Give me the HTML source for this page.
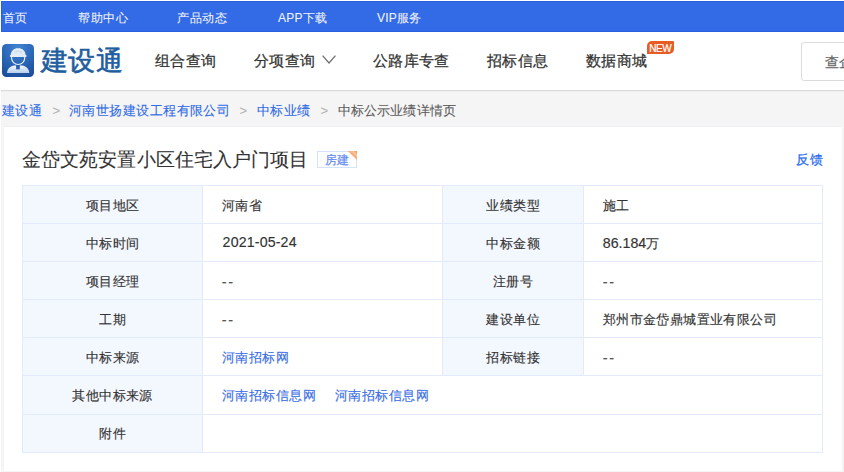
<!DOCTYPE html>
<html><head><meta charset="utf-8">
<style>
*{margin:0;padding:0;box-sizing:border-box}
html,body{width:844px;height:472px;overflow:hidden;background:#fff}
body{position:relative;font-family:"Liberation Sans",sans-serif;color:#333;-webkit-text-stroke:0.25px currentColor}
.a{position:absolute;white-space:nowrap;line-height:1}
#top{position:absolute;left:1px;top:1px;width:843px;height:31px;background:#336ae5;box-shadow:inset 1px 1px 0 #2a5fe2,inset 0 -1px 0 #2a5fe2}
#top .a{color:#eef2fd;font-size:12px;letter-spacing:0.6px;top:11px;-webkit-text-stroke:0.1px currentColor}
#nav{position:absolute;left:0;top:32px;width:844px;height:58px;background:#fff}
.it{letter-spacing:0.35px}
#gray{position:absolute;left:1px;top:90px;width:843px;height:382px;background:#f5f5f5;border-top:1px solid #dadada}
#gray2{position:absolute;left:1px;top:91px;width:843px;height:1px;background:#efefef}
.bc{font-size:13px;letter-spacing:0.45px;top:104px;color:#2f6be6;-webkit-text-stroke:0.1px currentColor}
.bc.sep{color:#b4b4b4;font-size:13px;top:104px}
.bc.cur{color:#5c5c5c}
#panel{position:absolute;left:4px;top:126px;width:838px;height:345px;background:#fff;border-top:1px solid #efeff3}
#title{font-size:19px;letter-spacing:0.1px;color:#333;left:22px;top:150px;-webkit-text-stroke:0.1px currentColor}
table{position:absolute;left:22px;top:185px;border-collapse:collapse;table-layout:fixed}
td{border:1px solid #e3eafc;height:38px;font-size:13px;letter-spacing:0.4px;color:#333;padding:2px 0 0 0;-webkit-text-stroke:0.15px currentColor}
td.h{background:#f3f7fe;text-align:center}
td.v{padding-left:18.8px}
.n{font-size:14.2px;letter-spacing:0}
td a{color:#3a6ee6;text-decoration:none;letter-spacing:0.5px}
td.h{text-indent:0.4px}
.d{font-size:14.5px;letter-spacing:1.6px;color:#555}
</style></head><body>
<div id="top">
  <div class="a" style="left:2px;letter-spacing:0">首页</div>
  <div class="a" style="left:77px">帮助中心</div>
  <div class="a" style="left:176px">产品动态</div>
  <div class="a" style="left:277px;letter-spacing:0.2px">APP下载</div>
  <div class="a" style="left:376px;letter-spacing:0.2px">VIP服务</div>
</div>
<div id="nav"></div>
<svg class="a" style="left:2px;top:44px" width="32" height="33" viewBox="0 0 32 33">
  <defs>
    <radialGradient id="bg" cx="0.5" cy="0.1" r="1">
      <stop offset="0" stop-color="#4184d2"/>
      <stop offset="0.6" stop-color="#2760b0"/>
      <stop offset="1" stop-color="#1a4a98"/>
    </radialGradient>
    <linearGradient id="sh" x1="0" y1="0" x2="0" y2="1">
      <stop offset="0" stop-color="#f4f8fc"/>
      <stop offset="1" stop-color="#b7d0ec"/>
    </linearGradient>
    <linearGradient id="hm" x1="0" y1="0" x2="0" y2="1">
      <stop offset="0" stop-color="#e9f1f9"/>
      <stop offset="1" stop-color="#dfe9f5"/>
    </linearGradient>
  </defs>
  <rect x="0" y="0" width="32" height="33" rx="4.5" fill="url(#bg)"/>
  <path d="M8.7 11.4 C8.7 7 11.8 4.3 16.15 4.3 C20.5 4.3 23.6 7 23.6 11.4 Z" fill="url(#hm)"/>
  <path d="M12.2 8.2 Q16.15 5.6 20.1 8.2" fill="none" stroke="#b9cfe8" stroke-width="0.8"/>
  <rect x="7.8" y="11" width="16.8" height="2.1" rx="1" fill="#e6eff8"/>
  <path d="M9.6 13 L9.6 14 A6.55 6.45 0 0 0 22.7 14 L22.7 13" fill="none" stroke="#eef4fa" stroke-width="1.1"/>
  <path d="M5 28.9 C5.4 24.3 8.4 22.1 12.3 21.5 L20 21.5 C23.9 22.1 26.9 24.3 27.3 28.9 Z" fill="url(#sh)"/>
  <rect x="14.1" y="21" width="3.7" height="4.4" fill="#2a5fae"/>
</svg>
<div class="a" style="left:40.5px;top:47.5px;font-size:27px;letter-spacing:0.8px;color:#1f5e9f;-webkit-text-stroke:0.6px #1f5e9f">建设通</div>
<div class="a it" style="left:155px;top:52.5px;font-size:15.3px">组合查询</div>
<div class="a it" style="left:254px;top:52.5px;font-size:15.3px">分项查询</div>
<svg class="a" style="left:321px;top:54px" width="16" height="11" viewBox="0 0 16 11"><path d="M1.6 1.6 L8 8.9 L14.4 1.6" fill="none" stroke="#6e6e6e" stroke-width="1.3"/></svg>
<div class="a it" style="left:373px;top:52.5px;font-size:15.3px">公路库专查</div>
<div class="a it" style="left:487px;top:52.5px;font-size:15.3px">招标信息</div>
<div class="a it" style="left:586px;top:52.5px;font-size:15.3px">数据商城</div>
<div class="a" style="left:647px;top:41px;width:27px;height:13px;background:#e65c22;border-radius:5px 1px 5px 0;color:#fff;font-size:10px;letter-spacing:-0.4px;text-indent:-0.4px;-webkit-text-stroke:0.2px #fff;text-align:center;line-height:15px">NEW</div>
<div class="a" style="left:801px;top:42px;width:60px;height:39px;border:1px solid #dcdcdc;border-radius:3px;background:#fff"></div>
<div class="a" style="left:825px;top:55px;font-size:14px;color:#666">查企</div>

<div id="gray"></div><div id="gray2"></div>
<div class="a bc" style="left:2px">建设通</div>
<div class="a bc sep" style="left:52.5px">&gt;</div>
<div class="a bc" style="left:69px">河南世扬建设工程有限公司</div>
<div class="a bc sep" style="left:239.5px">&gt;</div>
<div class="a bc" style="left:257px">中标业绩</div>
<div class="a bc sep" style="left:320.5px">&gt;</div>
<div class="a bc cur" style="left:337.5px;letter-spacing:0.2px">中标公示业绩详情页</div>

<div id="panel"></div>
<div class="a" id="title">金岱文苑安置小区住宅入户门项目</div>
<div class="a" style="left:317px;top:151px;width:40px;height:17px;border:1px solid #d6e2fb;color:#6a8ff0;font-size:11.5px;text-align:center;line-height:17px;text-indent:-1px;background:#fff">房建</div>
<svg class="a" style="left:348px;top:151px" width="9" height="9"><defs><linearGradient id="tg" x1="0.5" y1="0.5" x2="1" y2="0"><stop offset="0" stop-color="#f5a467"/><stop offset="0.5" stop-color="#f8c69a"/><stop offset="1" stop-color="#f08c48"/></linearGradient></defs><path d="M0 0 L9 0 L9 9 Z" fill="url(#tg)"/></svg>
<div class="a" style="left:796px;top:152.5px;font-size:13px;letter-spacing:1px;color:#2b6cf0">反馈</div>

<table>
<colgroup><col style="width:180px"><col style="width:240px"><col style="width:141px"><col style="width:239px"></colgroup>
<tr><td class="h">项目地区</td><td class="v">河南省</td><td class="h">业绩类型</td><td class="v">施工</td></tr>
<tr><td class="h">中标时间</td><td class="v"><span class="n" style="position:relative;top:-1.2px;left:0.8px;letter-spacing:0.15px">2021-05-24</span></td><td class="h">中标金额</td><td class="v"><span class="n">86.184</span>万</td></tr>
<tr><td class="h">项目经理</td><td class="v"><span class="d">--</span></td><td class="h">注册号</td><td class="v"><span class="d">--</span></td></tr>
<tr><td class="h">工期</td><td class="v"><span class="d">--</span></td><td class="h">建设单位</td><td class="v">郑州市金岱鼎城置业有限公司</td></tr>
<tr><td class="h">中标来源</td><td class="v"><a>河南招标网</a></td><td class="h">招标链接</td><td class="v"><span class="d">--</span></td></tr>
<tr style="height:39px"><td class="h" style="height:39px">其他中标来源</td><td class="v" colspan="3"><a>河南招标信息网</a><a style="margin-left:18.5px">河南招标信息网</a></td></tr>
<tr><td class="h" style="padding-top:0">附件</td><td class="v" colspan="3"></td></tr>
</table>
</body></html>
